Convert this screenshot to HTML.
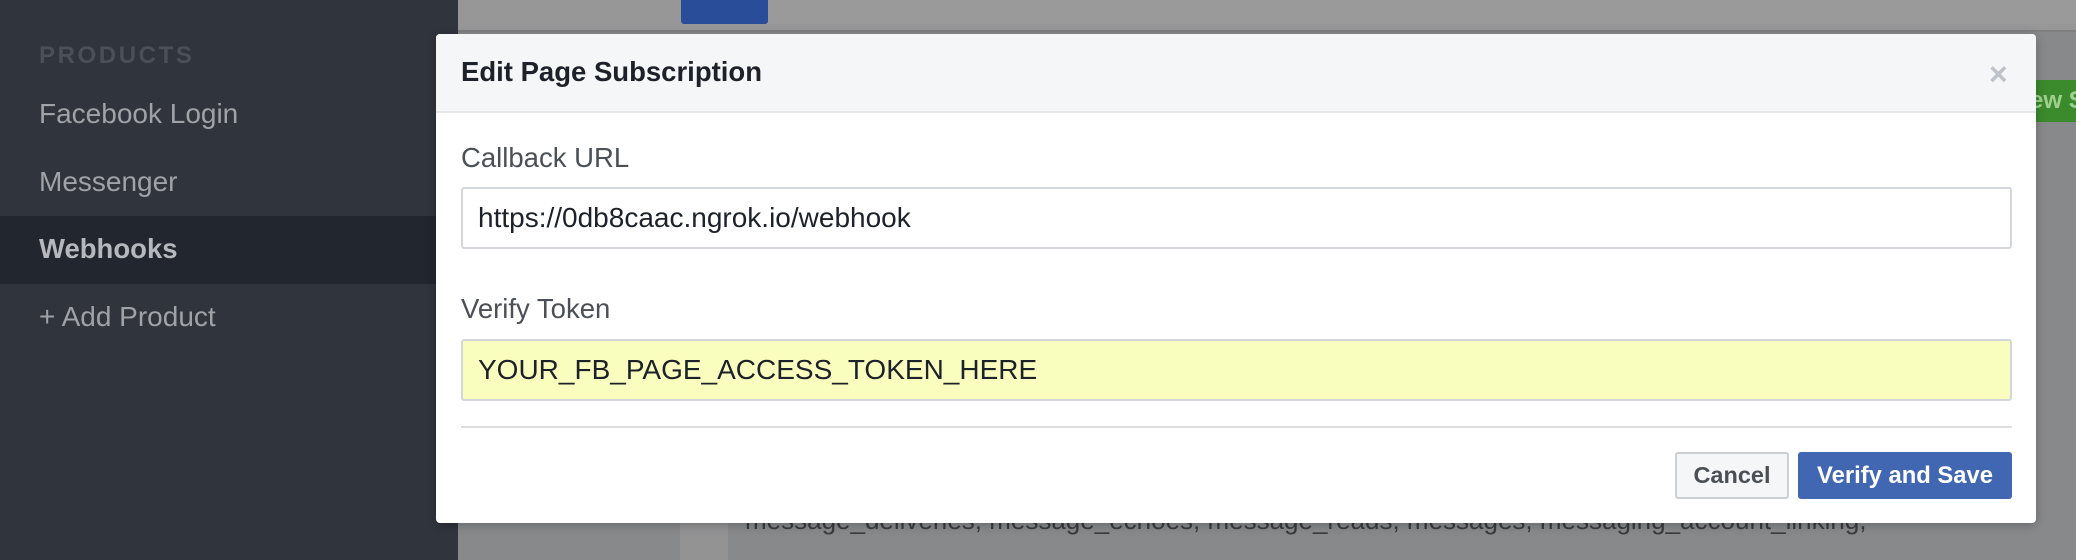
<!DOCTYPE html>
<html><head><meta charset="utf-8"><style>
*{margin:0;padding:0;box-sizing:border-box}
body{width:2076px;height:560px;overflow:hidden;position:relative;background:#88898b;font-family:"Liberation Sans",Arial,sans-serif}
.abs{position:absolute}
.side{left:0;top:0;width:458px;height:560px;background:#30343c}
.side div{position:absolute;left:39px;white-space:nowrap}
</style></head><body>
<div class="abs" style="left:458px;top:0;width:1618px;height:30px;background:#979798"></div>
<div class="abs" style="left:458px;top:30px;width:1618px;height:2px;background:#7e7f81"></div>
<div class="abs" style="left:681px;top:0;width:87px;height:24px;background:#2a4d9a;border-radius:0 0 3px 3px"></div>
<div class="abs" style="left:768px;top:0;width:1308px;height:24px;background:#9a9a9b"></div>
<div class="abs" style="left:2030px;top:80px;width:46px;height:42px;background:#3b8a2c;color:#9fd08f;font-weight:bold;font-size:24px;line-height:42px;overflow:hidden;white-space:nowrap">ew S</div>
<div class="abs" style="left:458px;top:400px;width:1618px;height:160px;background:#88898b"></div>
<div class="abs" style="left:680px;top:400px;width:48px;height:160px;background:#939394"></div>
<div class="abs" style="left:745px;top:505px;font-size:26px;color:#3a3b3e;white-space:nowrap">message_deliveries, message_echoes, message_reads, messages, messaging_account_linking,</div>
<div class="abs side">
<div style="top:42px;font-size:24px;font-weight:bold;color:#4b4f57;letter-spacing:2.6px">PRODUCTS</div>
<div style="top:98px;font-size:28px;color:#9fa2a7">Facebook Login</div>
<div style="top:166px;font-size:28px;color:#9fa2a7">Messenger</div>
<div class="abs" style="left:0;top:216px;width:458px;height:68px;background:#22262e"></div>
<div style="top:233px;font-size:27.5px;font-weight:bold;color:#b5b8bc">Webhooks</div>
<div style="top:301px;font-size:28px;color:#9fa2a7">+ Add Product</div>
</div>
<div class="abs" style="left:436px;top:34px;width:1600px;height:489px;background:#fff;border-radius:4px;overflow:hidden;box-shadow:0 2px 10px rgba(0,0,0,.25)">
<div class="abs" style="left:0;top:0;width:1600px;height:79px;background:#f5f6f7;border-bottom:2px solid #e5e6e9"></div>
<div class="abs" style="left:25px;top:22px;font-size:27.5px;font-weight:bold;color:#1d2129;white-space:nowrap">Edit Page Subscription</div>
<div class="abs" style="left:1553px;top:22px;font-size:32px;font-weight:bold;color:#bec2c9">×</div>
<div class="abs" style="left:25px;top:108px;font-size:27.5px;color:#4b4f56">Callback URL</div>
<div class="abs" style="left:25px;top:153px;width:1551px;height:62px;border:2px solid #d3d6db;border-radius:3px;background:#fff;padding-left:15px;font-size:28px;line-height:58px;color:#1d2129">https://0db8caac.ngrok.io/webhook</div>
<div class="abs" style="left:25px;top:259px;font-size:27.5px;color:#4b4f56">Verify Token</div>
<div class="abs" style="left:25px;top:305px;width:1551px;height:62px;border:2px solid #d3d6db;border-radius:3px;background:#f9fdbd;padding-left:15px;font-size:28px;line-height:58px;color:#1d2129">YOUR_FB_PAGE_ACCESS_TOKEN_HERE</div>
<div class="abs" style="left:25px;top:392px;width:1551px;height:2px;background:#dddfe2"></div>
<div class="abs" style="left:1239px;top:418px;width:114px;height:47px;background:#f5f6f7;border:2px solid #ccd0d5;border-radius:3px;font-size:23.5px;font-weight:bold;color:#4b4f56;text-align:center;line-height:43px">Cancel</div>
<div class="abs" style="left:1362px;top:418px;width:214px;height:47px;background:#4267b2;border-radius:3px;font-size:23.8px;font-weight:bold;color:#fff;text-align:center;line-height:47px;white-space:nowrap">Verify and Save</div>
</div>
</body></html>
